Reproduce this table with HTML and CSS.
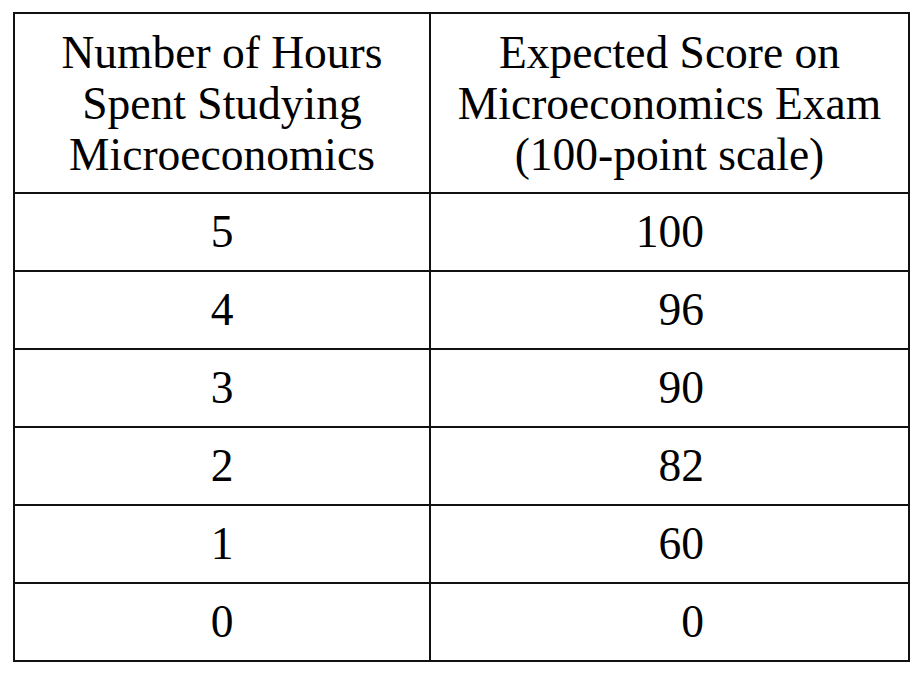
FILE: index.html
```html
<!DOCTYPE html>
<html>
<head>
<meta charset="utf-8">
<link rel="stylesheet" href="styles.css">
</head>
<body>
<table class="data">
  <thead>
    <tr>
      <th class="c1">Number of Hours<br>Spent Studying<br>Microeconomics</th>
      <th class="c2">Expected Score on<br>Microeconomics Exam<br>(100-point scale)</th>
    </tr>
  </thead>
  <tbody>
    <tr><td>5</td><td><span class="num">100</span></td></tr>
    <tr><td>4</td><td><span class="num">96</span></td></tr>
    <tr><td>3</td><td><span class="num">90</span></td></tr>
    <tr><td>2</td><td><span class="num">82</span></td></tr>
    <tr><td>1</td><td><span class="num">60</span></td></tr>
    <tr><td>0</td><td><span class="num">0</span></td></tr>
  </tbody>
</table>
</body>
</html>
```
FILE: styles.css
```css
html, body {
  margin: 0;
  padding: 0;
  background: #fff;
}
body {
  padding: 12px 0 0 13px;
  font-family: "Liberation Serif", "Times New Roman", serif;
  color: #000;
}
.data {
  border-collapse: collapse;
  width: 897px;
  table-layout: fixed;
}
.data th, .data td {
  border: 2px solid #111;
  text-align: center;
  font-weight: normal;
  font-size: 45.5px;
  padding: 0;
}
.data th.c1 { width: 414px; }
.data th {
  height: 178px;
  line-height: 51px;
  vertical-align: middle;
}
.data td {
  height: 76px;
  line-height: 42px;
}
.num {
  display: inline-block;
  width: 69px;
  text-align: right;
}
```
